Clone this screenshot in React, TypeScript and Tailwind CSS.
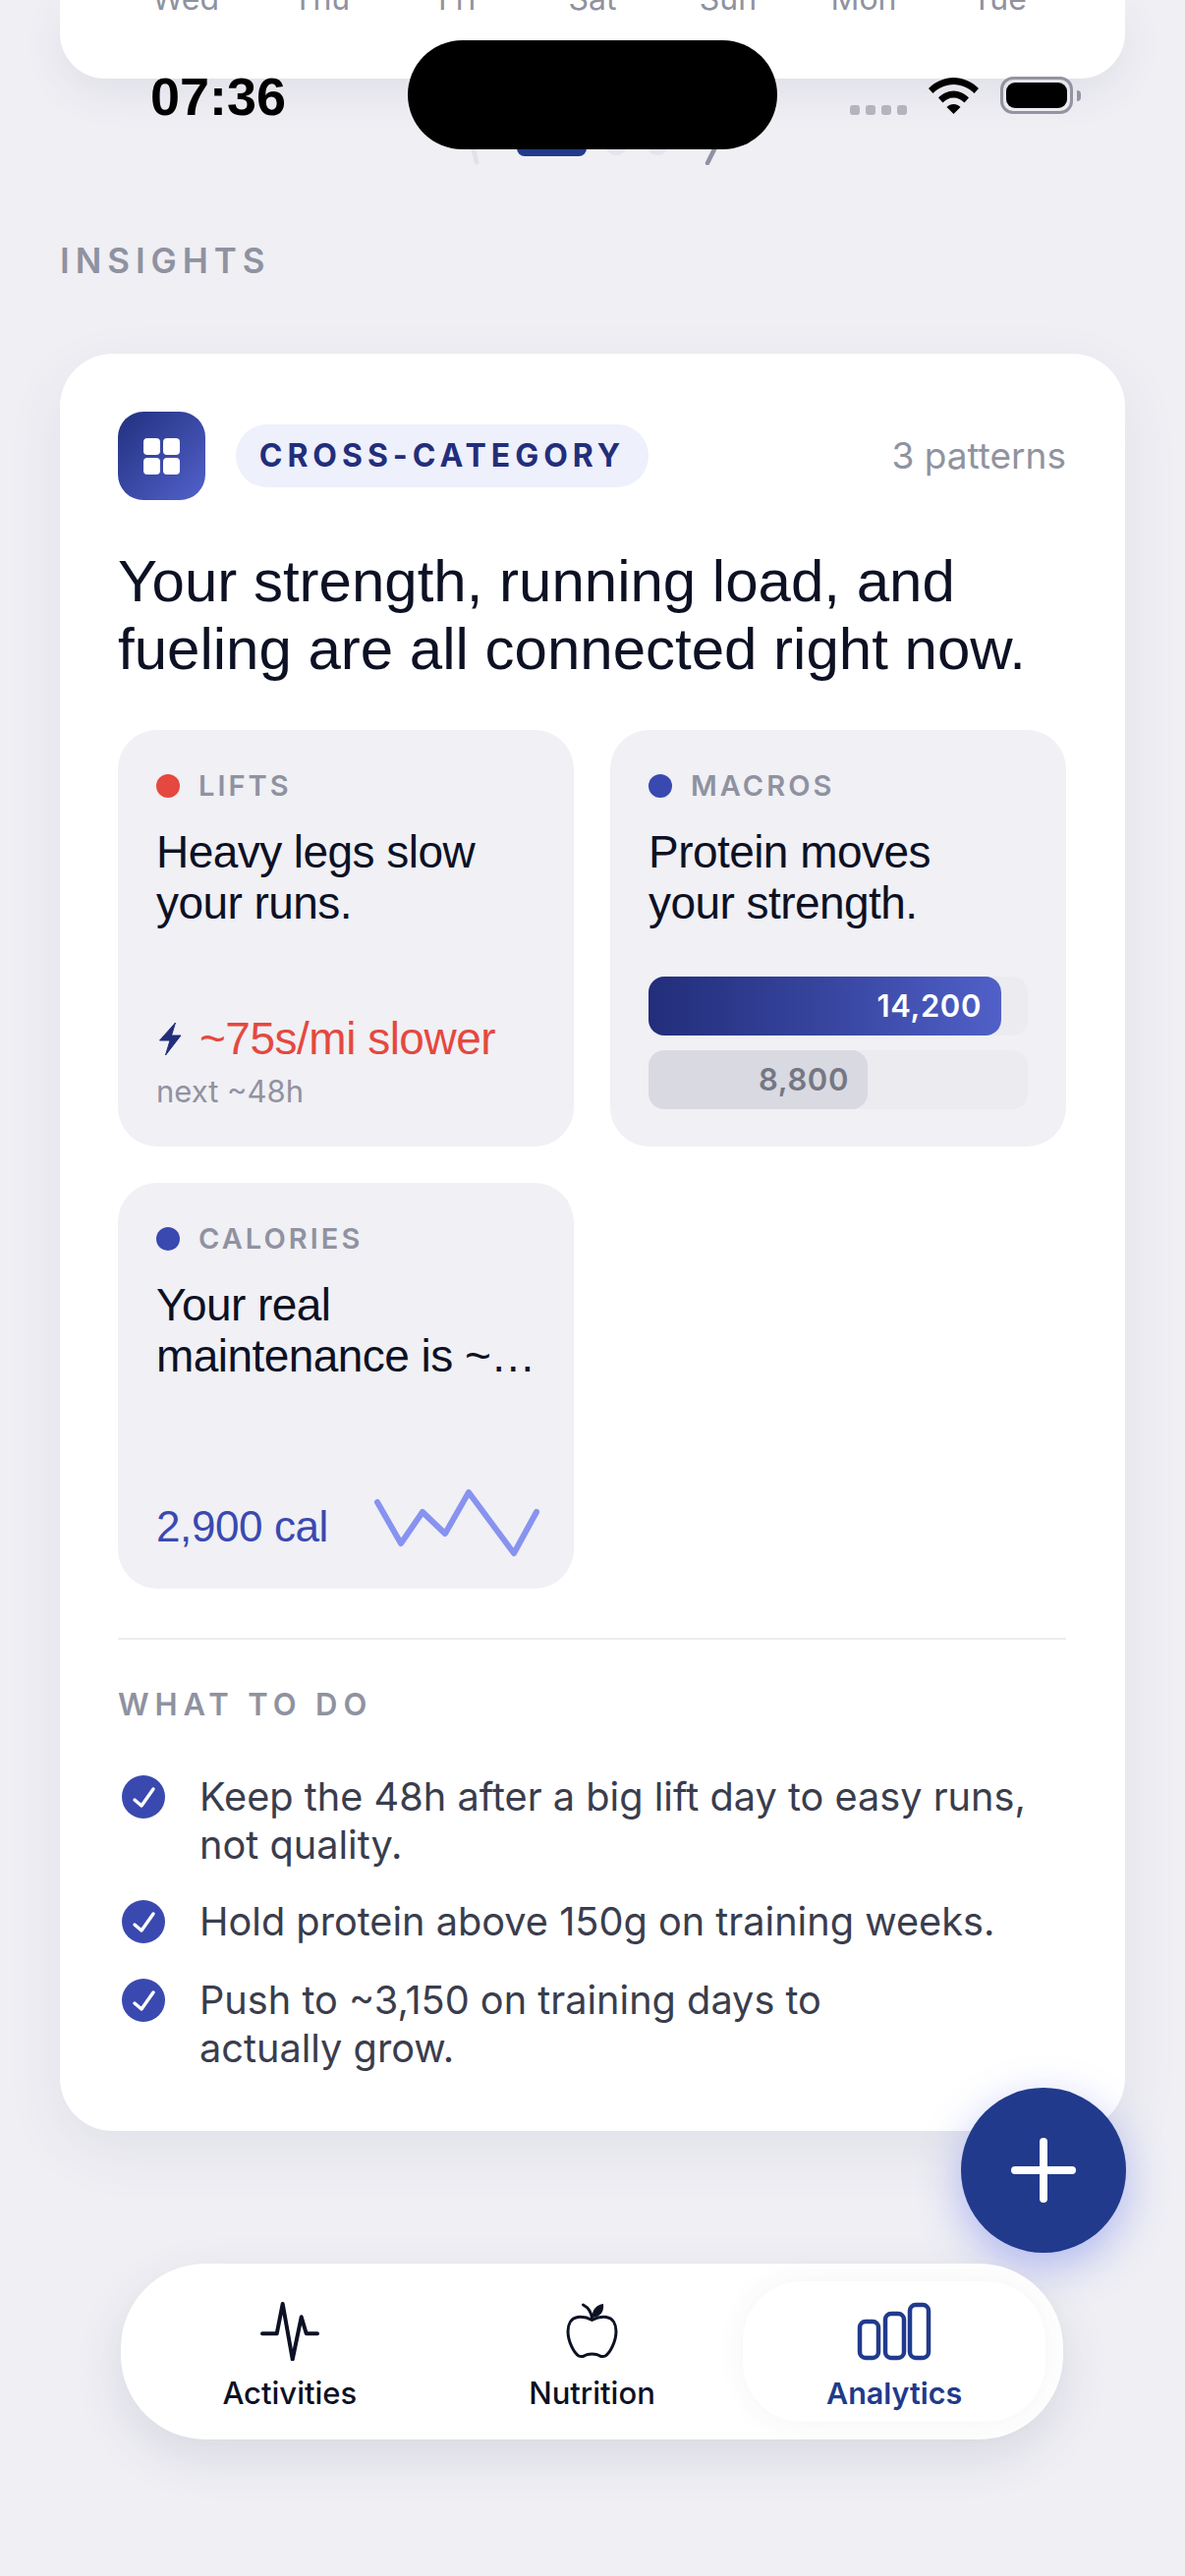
import React from 'react';

const inter = "font-['Inter',sans-serif]";
const helv = "font-['Liberation_Sans',Arial,sans-serif]";

const days = ['Wed', 'Thu', 'Fri', 'Sat', 'Sun', 'Mon', 'Tue'];

const todos = [
  ['Keep the 48h after a big lift day to easy runs,', 'not quality.'],
  ['Hold protein above 150g on training weeks.'],
  ['Push to ~3,150 on training days to', 'actually grow.'],
];

const titleCls = `mt-[23px] text-[46px] leading-[52px] tracking-[-0.55px] whitespace-nowrap text-[#0d1124] ${helv}`;

const Label = ({ dot, text }: { dot: string; text: string }) => (
  <div className="flex items-center h-[36px]">
    <span className={`w-[24px] h-[24px] rounded-full ${dot}`} />
    <span className={`ml-[19px] text-[29px] leading-[36px] font-semibold tracking-[0.105em] text-[#8f92a0] ${inter}`}>{text}</span>
  </div>
);

const StatusBar = () => (
  <div className="absolute top-0 left-0 w-full h-[160px] pointer-events-none">
    <span className={`absolute left-[153px] top-[70px] text-[54px] leading-[56px] font-bold text-black ${helv}`}>07:36</span>
    <div className="absolute left-[415px] top-[41px] w-[376px] h-[111px] rounded-[56px] bg-black" />
    <div className="absolute left-[865px] top-[107px] flex gap-[6px]">
      <span className="w-[10px] h-[10px] rounded-[3px] bg-[#b3b4bd]" />
      <span className="w-[10px] h-[10px] rounded-[3px] bg-[#b3b4bd]" />
      <span className="w-[10px] h-[10px] rounded-[3px] bg-[#b3b4bd]" />
      <span className="w-[10px] h-[10px] rounded-[3px] bg-[#b3b4bd]" />
    </div>
    <svg className="absolute left-[945px] top-[79px]" width="51" height="37" viewBox="0 0 51 37" fill="#000">
      <path d="M0 11 C7 4 16 0 25.5 0 C35 0 44 4 51 11 L46.5 16 C41 10.5 33.5 7 25.5 7 C17.5 7 10 10.5 4.5 16 Z" />
      <path d="M10 20.5 C14 16.5 19.5 13.5 25.5 13.5 C31.5 13.5 37 16.5 41 20.5 L36.5 25.5 C33.5 22.5 30 20.5 25.5 20.5 C21 20.5 17.5 22.5 14.5 25.5 Z" />
      <path d="M18.5 30 C20.5 28 23 27 25.5 27 C28 27 30.5 28 32.5 30 L25.5 37 Z" />
    </svg>
    <div className="absolute left-[1018px] top-[78px] w-[74px] h-[38px] rounded-[13px] border-[3px] border-[#92949f] p-[3px]">
      <div className="w-full h-full rounded-[9px] bg-black" />
    </div>
    <div className="absolute left-[1096px] top-[92px] w-[4px] h-[11px] rounded-r-full bg-[#92949f]" />
  </div>
);

const App = () => {
  return (
    <div className={`relative w-[1206px] h-[2622px] overflow-hidden bg-[#efeff4] ${inter}`}>
      <div className="mx-[61px] h-[80px] rounded-b-[46px] bg-white shadow-[0_16px_40px_rgba(60,60,100,0.08)] relative overflow-hidden">
        {days.map((d, i) => (
          <span
            key={d}
            className={`absolute top-[-19px] -translate-x-1/2 text-[32px] leading-[36px] text-[#8f92a0] ${inter}`}
            style={{ left: 128 + i * 138 }}
          >
            {d}
          </span>
        ))}
      </div>

      <svg className="block ml-[476px] mt-[60px]" width="256" height="28" viewBox="0 0 256 28" fill="none">
        <path d="M3 0 L9 25" stroke="#e2e3ea" strokeWidth="5" strokeLinecap="round" />
        <rect x="50" y="-10" width="71" height="29" rx="8" fill="#213a8c" />
        <circle cx="151" cy="7" r="11" fill="#e4e5ec" />
        <circle cx="193" cy="7" r="11" fill="#e4e5ec" />
        <path d="M253 8 L244 26" stroke="#8f92a0" strokeWidth="4.5" strokeLinecap="round" />
      </svg>

      <div className={`ml-[61px] mt-[75px] text-[35px] leading-[44px] font-semibold tracking-[0.17em] text-[#8f92a0] ${inter}`}>INSIGHTS</div>

      <div className="mx-[61px] mt-[73px] rounded-[54px] bg-white pt-[59px] pb-[59px] pl-[59px] pr-[60px] shadow-[0_20px_60px_rgba(60,60,100,0.08)]">
        <div className="flex items-center h-[90px]">
          <div className="w-[89px] h-[90px] rounded-[26px] bg-linear-to-br from-[#22307f] to-[#5362cb] flex items-center justify-center">
            <div className="grid grid-cols-2 gap-[3px]">
              <span className="w-[17px] h-[17px] rounded-[4px] bg-white" />
              <span className="w-[17px] h-[17px] rounded-[4px] bg-white" />
              <span className="w-[17px] h-[17px] rounded-[4px] bg-white" />
              <span className="w-[17px] h-[17px] rounded-[4px] bg-white" />
            </div>
          </div>
          <div className={`ml-[31px] h-[64px] w-[420px] rounded-full bg-[#eef0fb] flex items-center justify-center text-[32px] font-bold tracking-[0.155em] text-[#222e7a] ${inter}`}>
            CROSS-CATEGORY
          </div>
          <span className={`ml-auto text-[37px] text-[#9093a0] ${inter}`}>3 patterns</span>
        </div>

        <h2 className={`mt-[48px] text-[60px] leading-[69px] font-normal text-[#0d1124] ${helv}`}>
          Your strength, running load, and
          <br />
          fueling are all connected right now.
        </h2>

        <div className="mt-[48px] grid grid-cols-2 gap-x-[37px] gap-y-[37px]">
          <div className="h-[424px] rounded-[40px] bg-[#f0f0f5] px-[39px] pt-[39px] pb-[38px] flex flex-col">
            <Label dot="bg-[#e5483f]" text="LIFTS" />
            <p className={titleCls}>
              Heavy legs slow
              <br />
              your runs.
            </p>
            <div className="mt-auto flex items-center h-[52px]">
              <svg className="ml-[2px]" width="24" height="35" viewBox="0 0 24 35">
                <path d="M17.5 1 L1.5 19 H12 L7.5 34 L23 14 H13.5 Z" fill="#222e7a" stroke="#222e7a" strokeWidth="1" strokeLinejoin="round" />
              </svg>
              <span className={`ml-[18px] text-[46px] leading-[52px] tracking-[-0.5px] text-[#e5483f] ${helv}`}>~75s/mi slower</span>
            </div>
            <div className={`mt-[10px] text-[31px] leading-[36px] text-[#9093a0] ${inter}`}>next ~48h</div>
          </div>

          <div className="h-[424px] rounded-[40px] bg-[#f0f0f5] px-[39px] pt-[39px] pb-[38px] flex flex-col">
            <Label dot="bg-[#3a49b0]" text="MACROS" />
            <p className={titleCls}>
              Protein moves
              <br />
              your strength.
            </p>
            <div className="mt-auto flex flex-col gap-[15px]">
              <div className="h-[60px] rounded-[16px] bg-[#ebebf0]">
                <div className="h-full w-[359px] rounded-[16px] bg-linear-to-r from-[#222e7a] via-[#37459f] to-[#5060c8] flex items-center justify-end pr-[20px]">
                  <span className={`text-[31px] font-semibold tracking-[0.02em] text-white ${inter}`}>14,200</span>
                </div>
              </div>
              <div className="h-[60px] rounded-[16px] bg-[#ebebf0]">
                <div className="h-full w-[223px] rounded-[16px] bg-[#d9d9e1] flex items-center justify-end pr-[19px]">
                  <span className={`text-[31px] font-semibold tracking-[0.02em] text-[#757784] ${inter}`}>8,800</span>
                </div>
              </div>
            </div>
          </div>

          <div className="h-[413px] rounded-[40px] bg-[#f0f0f5] pl-[39px] pr-[38px] pt-[39px] pb-[38px] flex flex-col">
            <Label dot="bg-[#3a49b0]" text="CALORIES" />
            <p className={titleCls}>
              Your real
              <br />
              maintenance is ~…
            </p>
            <div className="mt-auto flex items-end justify-between -mr-[5px]">
              <span className={`text-[44px] leading-[50px] tracking-[-0.4px] text-[#3a49b0] ${helv}`}>2,900 cal</span>
              <svg className="overflow-visible -translate-x-[2px]" width="168" height="63" viewBox="379 1515 168 63" fill="none">
                <path
                  d="M382 1528 L406 1570 L428 1538 L451 1560 L475 1518 L521 1580 L544 1538"
                  stroke="#8793ef"
                  strokeWidth="6"
                  strokeLinecap="round"
                  strokeLinejoin="round"
                />
              </svg>
            </div>
          </div>
        </div>

        <div className="mt-[50px] h-[2px] bg-[#ececf1]" />

        <div className={`mt-[47px] text-[31px] leading-[38px] font-semibold tracking-[0.19em] text-[#8f92a0] ${inter}`}>WHAT TO DO</div>

        <div className="mt-[51px] flex flex-col gap-[29px] pl-[4px]">
          {todos.map((lines) => (
            <div key={lines[0]} className="flex items-start last:mt-[2px]">
              <div className="mt-[2px] w-[44px] h-[44px] rounded-full bg-[#3a49b0] shrink-0">
                <svg width="44" height="44" viewBox="0 0 44 44" fill="none">
                  <path d="M13 25 L20 31 L32 14" stroke="#fff" strokeWidth="3.4" strokeLinecap="round" strokeLinejoin="round" />
                </svg>
              </div>
              <p className={`ml-[35px] text-[39.7px] leading-[49px] text-[#3a3d4d] ${inter}`}>
                {lines.map((l, i) => (
                  <React.Fragment key={l}>
                    {i > 0 && <br />}
                    {l}
                  </React.Fragment>
                ))}
              </p>
            </div>
          ))}
        </div>
      </div>

      <StatusBar />

      {/* floating add button */}
      <button className="absolute left-[978px] top-[2125px] w-[168px] h-[168px] rounded-full bg-[#213a8c] flex items-center justify-center shadow-[0_14px_44px_rgba(80,100,235,0.4)] z-10">
        <svg width="66" height="66" viewBox="0 0 66 66" fill="none">
          <path d="M33 4 V62 M4 33 H62" stroke="#fff" strokeWidth="8" strokeLinecap="round" />
        </svg>
      </button>

      {/* tab bar */}
      <nav className="absolute left-[123px] top-[2304px] w-[959px] h-[179px] rounded-[86px] bg-white px-[18px] py-[18px] grid grid-cols-3 shadow-[0_18px_50px_rgba(60,60,110,0.12)] z-20">
        <div className="flex flex-col items-center pt-[21px]">
          <svg width="60" height="60" viewBox="0 0 60 60" fill="none">
            <path d="M2 32.3 H16.7 L22.7 2 L32.7 58.5 L41.7 15.3 L46.7 32.3 H58" stroke="#0d1124" strokeWidth="4" strokeLinecap="round" strokeLinejoin="round" />
          </svg>
          <span className={`mt-[15px] text-[31px] leading-[36px] font-medium text-[#0d1124] ${inter}`}>Activities</span>
        </div>
        <div className="flex flex-col items-center pt-[21px]">
          <svg width="60" height="60" viewBox="0 0 60 60" fill="none">
            <path
              d="M30.5 18.5 C26 16 20 15 16 15.5 C9 16.5 6 23 6 30 C6 40 12 52 17 55 C21 57 23 54 26 53.5 C28 53 33 53 35 53.5 C38 54 40 57 44 55 C49 52 55 40 55 30 C55 23 52 16.5 45 15.5 C41 15 35 16 30.5 18.5 Z"
              stroke="#0d1124"
              strokeWidth="3"
              strokeLinejoin="round"
            />
            <path d="M30.5 17 C30 11 27 6 21.5 3" stroke="#0d1124" strokeWidth="3" strokeLinecap="round" />
            <path d="M31 16 C30 8 35 3 42 2 C43 10 39 15 31 16 Z" fill="#0d1124" />
          </svg>
          <span className={`mt-[15px] text-[31px] leading-[36px] font-medium text-[#0d1124] ${inter}`}>Nutrition</span>
        </div>
        <div className="flex flex-col items-center pt-[21px] rounded-[60px] bg-white shadow-[0_0_30px_rgba(60,60,120,0.06)]">
          <svg width="76" height="60" viewBox="0 0 76 60" fill="none">
            <rect x="3" y="20" width="19" height="37" rx="6" stroke="#213a8c" strokeWidth="4.5" />
            <rect x="29" y="12" width="19" height="45" rx="6" stroke="#213a8c" strokeWidth="4.5" />
            <rect x="54" y="3" width="19" height="54" rx="6" stroke="#213a8c" strokeWidth="4.5" />
          </svg>
          <span className={`mt-[15px] text-[30.5px] leading-[36px] font-semibold text-[#213a8c] ${inter}`}>Analytics</span>
        </div>
      </nav>
    </div>
  );
};

export default App;
